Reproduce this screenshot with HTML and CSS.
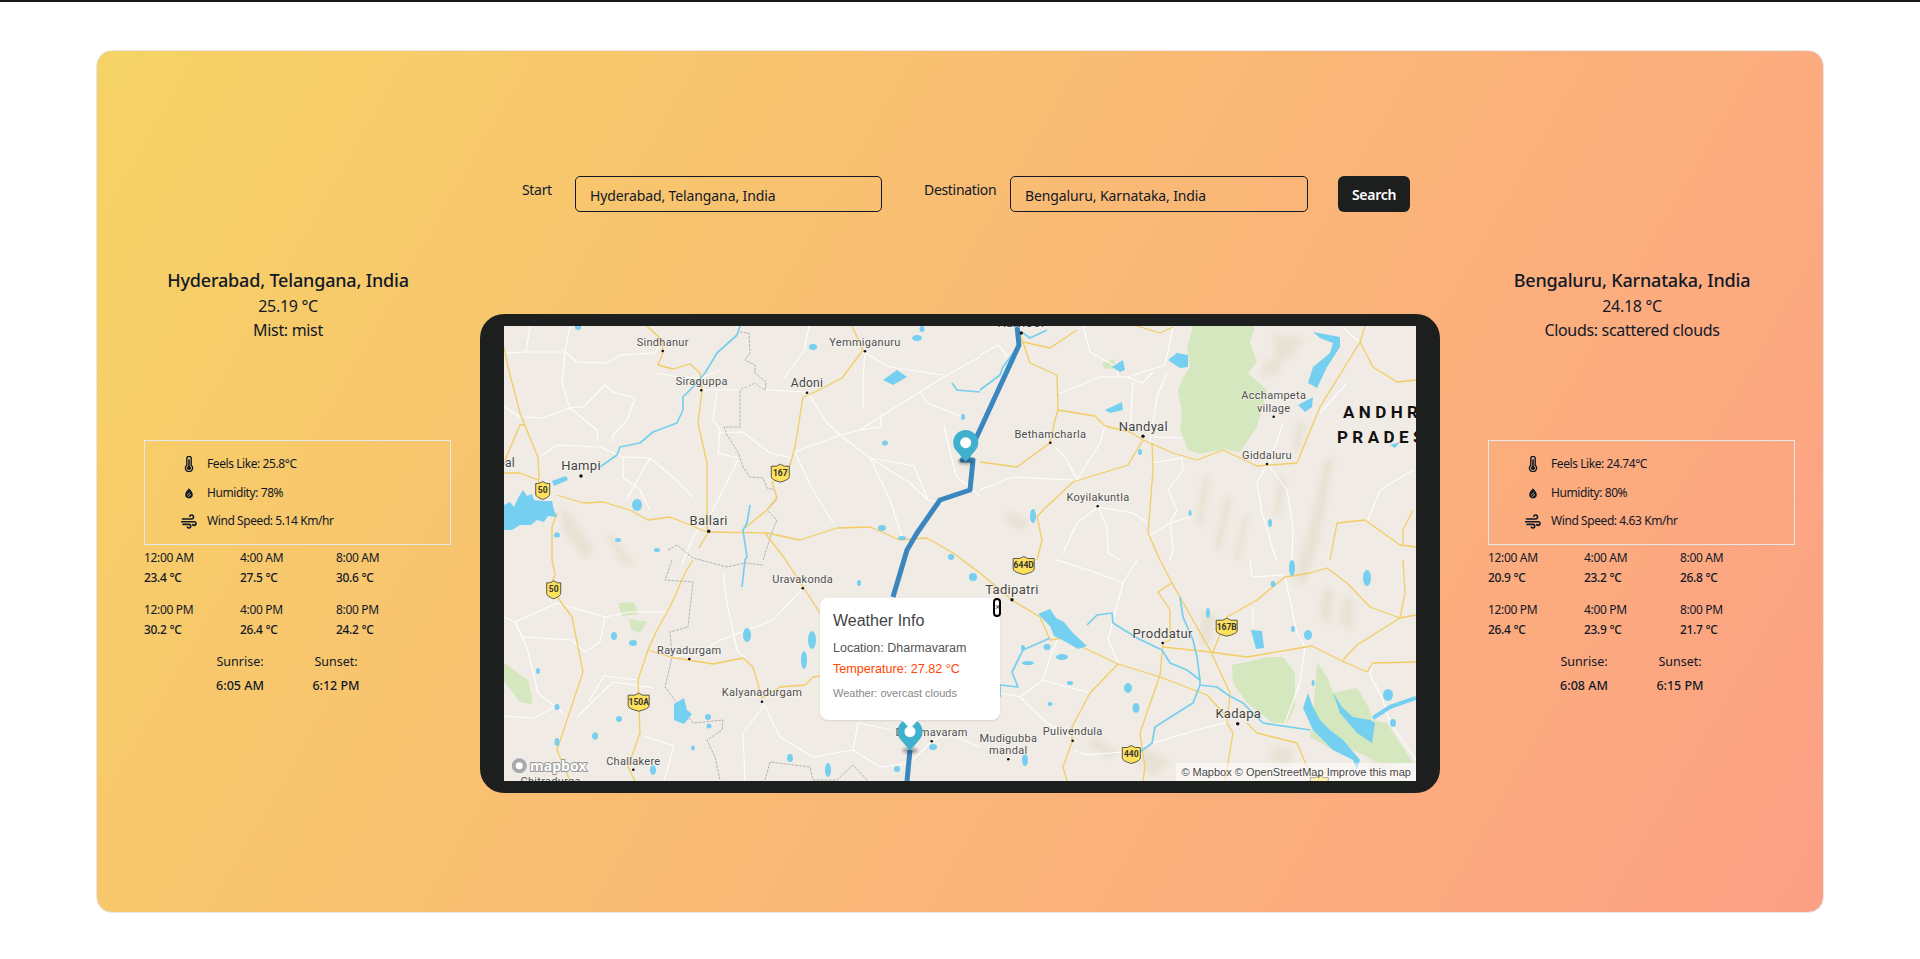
FILE: index.html
```html
<!DOCTYPE html>
<html>
<head>
  <meta charset="utf-8">
  <title>Route Weather</title>
  <link rel="stylesheet" href="styles.css">
</head>

<body>
  <div class="topbar"></div>
  <main class="card">
    <form class="search">
      <label class="label-start" for="start">Start</label>
      <input class="input-start" id="start" type="text" value="Hyderabad, Telangana, India">
      <label class="label-dest" for="dest">Destination</label>
      <input class="input-dest" id="dest" type="text" value="Bengaluru, Karnataka, India">
      <button type="button" class="search-btn">Search</button>
    </form>

    <div class="columns">
      <section class="city">
        <h2>Hyderabad, Telangana, India</h2>
        <p>25.19 °C</p>
        <p>Mist: mist</p>
        <div class="stats">
          <div class="stat"><svg class="icon"><use href="#i-temp"/></svg><span>Feels Like: 25.8°C</span></div>
          <div class="stat"><svg class="icon"><use href="#i-drop"/></svg><span>Humidity: 78%</span></div>
          <div class="stat"><svg class="icon"><use href="#i-wind"/></svg><span>Wind Speed: 5.14 Km/hr</span></div>
        </div>
        <div class="hours">
          <div><span>12:00 AM</span><b>23.4 °C</b></div>
          <div><span>4:00 AM</span><b>27.5 °C</b></div>
          <div><span>8:00 AM</span><b>30.6 °C</b></div>
          <div><span>12:00 PM</span><b>30.2 °C</b></div>
          <div><span>4:00 PM</span><b>26.4 °C</b></div>
          <div><span>8:00 PM</span><b>24.2 °C</b></div>
        </div>
        <div class="sun">
          <div><span>Sunrise:</span><b>6:05 AM</b></div>
          <div><span>Sunset:</span><b>6:12 PM</b></div>
        </div>
      </section>

      <section class="map-frame">
        <div class="map">
          <svg class="map-svg" viewBox="0 0 912 455" width="912" height="455">
            <defs>
              <symbol id="i-temp" viewBox="0 0 16 16" overflow="visible">
                <path d="M5.8 9.2V2.6a2.2 2.2 0 0 1 4.4 0v6.6a3.6 3.6 0 1 1-4.4 0Z" fill="none" stroke="#111827" stroke-width="1.4"/>
                <circle cx="8" cy="12" r="2.1" fill="#111827"/>
                <rect x="7.2" y="3.4" width="1.6" height="8" fill="#111827"/>
              </symbol>
              <symbol id="i-drop" viewBox="0 0 16 16" overflow="visible">
                <path d="M8 3.2C9.6 5.4 11.8 7.2 11.8 9.6a3.8 3.8 0 0 1-7.6 0C4.2 7.2 6.4 5.4 8 3.2Z" fill="#111827"/>
                <path d="M6 10.2 9 7.6M7 11.8l3-2.4" stroke="#f7c96c" stroke-width=".8"/>
              </symbol>
              <symbol id="i-wind" viewBox="0 0 16 16" overflow="visible">
                <path d="M1.5 6h9a2 2 0 1 0-1.8-2.8M.5 8.8h12.7a1.8 1.8 0 1 1-1.6 2.7M2 11.4h6a1.8 1.8 0 1 1-1.6 2.7" fill="none" stroke="#111827" stroke-width="1.6" stroke-linecap="round"/>
              </symbol>
              <path id="shield" d="M-7-6.5h3.2L0-8.5l3.8 2H7V4Q7 7 0 9.5-7 7-7 4Z"/>
              <path id="shield-w" d="M-9-6.5h5L0-8.5l4 2h5V4Q9 7 0 9.5-9 7-9 4Z"/>
              <path id="shield-x" d="M-10.5-6.5h6.5L0-8.5l4 2h6.5V4Q10.5 7 0 9.5-10.5 7-10.5 4Z"/>
            </defs>

            <rect class="land" width="912" height="455"/>

            <!-- relief -->
            <g class="relief">
              <polygon points="56,182 68,190 90,225 80,232 60,205"/>
              <polygon points="100,205 112,215 130,238 118,238"/>
              <polygon points="770,8 800,12 790,30 770,36"/>
              <polygon points="760,36 780,30 775,48 758,50"/>
              <polygon points="700,150 706,152 698,200 692,198"/>
              <polygon points="722,170 728,172 716,225 710,222"/>
              <polygon points="740,190 745,192 735,234 730,232"/>
              <polygon points="820,135 830,132 815,215 800,260 790,255 808,190"/>
              <polygon points="775,150 782,152 776,190 770,188"/>
              <polygon points="795,95 802,98 795,125 788,120"/>
              <polygon points="840,270 850,275 848,305 835,295"/>
              <polygon points="820,260 830,265 826,300 815,290"/>
              <polygon points="505,185 525,195 518,205 500,195"/>
              <polygon points="590,410 615,425 605,432 585,420"/>
              <polygon points="700,285 712,290 705,320 695,315"/>
              <polygon points="770,420 790,425 785,440 765,435"/>
              <polygon points="870,420 890,430 880,445 865,435"/>
              <polygon points="640,420 665,435 650,450 635,440"/>
            </g>

            <!-- parks -->
            <g class="park">
              <polygon points="689,0 683,21 686,41 678,54 674,64 678,87 676,104 684,124 696,128 719,123 736,126 753,101 763,64 744,47 753,36 746,17 751,0"/>
              <polygon points="728,339 729,357 743,377 769,397 783,397 791,381 791,347 779,331 763,331 743,336"/>
              <polygon points="813,336 823,351 829,367 853,362 866,384 868,394 883,397 909,437 876,437 843,421 829,424 806,411 809,391"/>
              <polygon points="0,337 24,354 28,370 28,378 16,376 0,355"/>
              <polygon points="114,277 130,276 134,288 118,290"/>
              <polygon points="125,293 143,296 136,307 127,303"/>
              <polygon points="598,37 610,33 612,42 600,43"/>
            </g>

            <!-- white roads -->
            <g class="road">
              <polyline points="0,27 23,26 61,26 73,36 103,37 116,29 151,27 156,17"/>
              <polyline points="61,26 58,57 66,82 93,104 94,116"/>
              <polyline points="66,82 79,81 101,59 109,66 131,72 123,94 109,109 109,116"/>
              <polyline points="0,81 16,91 39,92 66,82"/>
              <polyline points="26,0 22,26"/>
              <polyline points="66,0 61,26"/>
              <polyline points="36,131 53,119 96,121 119,131 146,132 169,151 189,171"/>
              <polyline points="119,131 119,151 136,164 146,184"/>
              <polyline points="146,132 130,160 122,175"/>
              <polyline points="153,47 173,51 196,52 216,44"/>
              <polyline points="196,64 236,64 251,57 263,64 303,66"/>
              <polyline points="304,67 323,97 336,109 366,132 406,157 424,174"/>
              <polyline points="291,126 336,109 356,104 376,91 443,49 476,31"/>
              <polyline points="366,132 386,174 399,214"/>
              <polyline points="291,127 309,164 329,197"/>
              <polyline points="234,134 209,184 189,211"/>
              <polyline points="416,66 423,77 459,91"/>
              <polyline points="378,87 376,101 356,104"/>
              <polyline points="361,27 359,51 359,81"/>
              <polyline points="359,26 386,41 439,49"/>
              <polyline points="305,0 300,25 280,52"/>
              <polyline points="213,67 209,94 216,104 214,127 234,132"/>
              <polyline points="214,107 239,106 266,127 288,132"/>
              <polyline points="366,132 410,140 424,174 440,178"/>
              <polyline points="440,100 452,150 476,170"/>
              <polyline points="189,211 178,238"/>
              <polyline points="0,291 11,296 53,277 101,291 126,286 164,286"/>
              <polyline points="11,296 23,321 34,367 59,387"/>
              <polyline points="11,296 18,311 68,314 81,326 96,316 101,291"/>
              <polyline points="73,391 109,356 149,362"/>
              <polyline points="0,390 30,392 53,380"/>
              <polyline points="259,377 276,411 309,431 349,424 354,397 388,404"/>
              <polyline points="259,381 239,407 241,455"/>
              <polyline points="219,247 223,277 233,324 241,332"/>
              <polyline points="299,262 269,294 243,304 216,314 196,327 169,331"/>
              <polyline points="349,424 376,441 406,437 428,415"/>
              <polyline points="428,415 443,407 476,421"/>
              <polyline points="134,354 100,350 85,375"/>
              <polyline points="140,410 170,420 160,455"/>
              <polyline points="496,367 516,371 539,354 546,331 554,312"/>
              <polyline points="539,354 586,367"/>
              <polyline points="516,371 543,397 569,411"/>
              <polyline points="619,257 604,314 614,336"/>
              <polyline points="553,234 593,247 619,257 633,234"/>
              <polyline points="569,424 583,429 618,426 649,417 693,404 724,396"/>
              <polyline points="749,281 749,301"/>
              <polyline points="781,251 793,307 801,321 796,357 781,397"/>
              <polyline points="869,337 866,349 879,374 886,397 912,434"/>
              <polyline points="746,234 748,251 781,249"/>
              <polyline points="476,29 494,19 509,37"/>
              <polyline points="556,67 596,51 623,51 661,39 669,1"/>
              <polyline points="623,51 639,57 649,46"/>
              <polyline points="629,56 626,106"/>
              <polyline points="579,0 586,26 613,41 614,51"/>
              <polyline points="663,47 653,71 646,116"/>
              <polyline points="649,111 679,112"/>
              <polyline points="476,164 509,151 569,154"/>
              <polyline points="551,121 563,134 573,154 596,117 601,100"/>
              <polyline points="648,137 678,132 679,144 664,164 673,184 666,197 643,211"/>
              <polyline points="666,197 686,191"/>
              <polyline points="666,197 669,224 666,234"/>
              <polyline points="594,181 603,201 604,227 616,234"/>
              <polyline points="594,181 629,187 643,197"/>
              <polyline points="594,181 573,197 559,227"/>
              <polyline points="763,139 753,157 758,187 769,224 773,234"/>
              <polyline points="764,139 783,164 789,201 788,234"/>
              <polyline points="816,87 843,57"/>
              <polyline points="779,97 769,127 766,137"/>
              <polyline points="909,144 876,164 864,194"/>
              <polyline points="856,17 839,1"/>
            </g>

            <!-- state borders -->
            <g class="border">
              <polyline points="236,6 245,7 246,27 241,34 251,39 251,47 262,56 261,64 251,57 236,64 236,101 220,101 223,109 234,126 239,141 246,151 259,152 263,162 271,164 273,174 263,184 273,194 268,206 259,234"/>
              <polyline points="168,234 161,254 189,256 184,301 166,306 168,331 161,361 176,381 189,397 219,394 218,404 203,414 211,431 216,454"/>
              <polyline points="164,224 173,219 189,232 223,241 241,237 259,239"/>
              <polyline points="261,454 266,436 306,441 309,454 333,454 349,439 363,454"/>
            </g>

            <!-- highways -->
            <g class="hwy">
              <polyline points="0,21 4,41 16,87 24,107 34,131 35,154"/>
              <polyline points="0,147 16,147 34,154 39,164"/>
              <polyline points="53,169 79,177 99,176 126,184 144,194 166,191 203,206 263,207 296,214 333,202 366,201 396,214 423,212 449,227 476,247 508,274 536,291 546,314 559,312 614,338 656,351 703,369 723,391"/>
              <polyline points="143,0 158,14 159,27 154,39 169,43 186,38 196,47 198,64 194,97 203,137 203,204"/>
              <polyline points="348,0 359,24 338,52 309,67 299,71 291,121 286,139 268,157 273,171 263,184 241,202"/>
              <polyline points="205,205 195,222"/>
              <polyline points="261,207 281,233 316,287"/>
              <polyline points="48,234 48,201 53,187"/>
              <polyline points="48,234 51,249 49,254 54,272 68,291 79,346 53,424 66,455"/>
              <polyline points="189,234 181,247 166,281 153,304 144,324 134,354 136,407 124,441 131,455"/>
              <polyline points="144,324 166,331 209,338 239,332 249,341 258,372 276,361 301,359 309,351 316,350"/>
              <polyline points="519,16 526,37 553,49 554,84 591,90 601,100 626,106 639,114 669,127 693,134 719,124 753,140 793,137 816,81 856,16 861,0"/>
              <polyline points="856,16 869,41 893,56 912,54"/>
              <polyline points="476,136 513,141 546,117 551,94 554,84"/>
              <polyline points="639,114 624,139 569,156 539,184 533,191 538,214 533,234"/>
              <polyline points="648,117 649,144 644,207 656,234 668,257 706,324 726,367 723,397 729,407 721,455"/>
              <polyline points="668,257 654,266 666,284 666,314 659,317 656,349 636,407 641,441 639,455"/>
              <polyline points="659,321 706,326 743,331 796,322 808,320 836,334 863,346 869,337 912,336"/>
              <polyline points="709,326 723,291 753,274 781,251 806,247 823,242 843,257 866,281 896,292 912,289"/>
              <polyline points="896,292 901,267 899,234"/>
              <polyline points="826,234 833,197 861,194 896,219 912,221"/>
              <polyline points="899,219 899,204 909,184"/>
              <polyline points="839,334 853,319 896,292"/>
              <polyline points="743,397 753,407 793,417 803,441"/>
              <polyline points="614,338 586,367 568,401 568,416 559,441 563,455"/>
              <polyline points="573,4 546,22 519,16 513,0"/>
              <polyline points="633,0 656,7 669,1"/>
              <polyline points="21,99 16,99 1,134"/>
            </g>

            <!-- rivers -->
            <g class="river">
              <polyline points="236,0 233,9 213,27 201,47 189,61 179,71 179,84 173,97 149,106 136,117 116,121 113,129 96,141"/>
              <polyline points="476,64 496,49 499,41 513,22"/>
              <polyline points="519,7 526,12 543,4"/>
              <polyline points="448,57 453,64 476,66"/>
              <polyline points="246,179 243,197 239,204 243,231 241,234 238,261"/>
              <polyline points="583,299 593,289 608,287 609,297 633,312 658,324 666,337 683,344 696,354 696,359 713,361 724,369 739,377 759,397 806,404"/>
              <polyline points="696,359 689,377 673,387 651,401 648,417 636,426"/>
              <polyline points="676,271 679,291 689,314 693,331 696,354"/>
              <polyline points="546,312 519,324 508,346 514,361 496,359 496,371"/>
              <polyline class="wide" points="869,392 886,381 912,372"/>
            </g>

            <!-- lakes -->
            <g class="water">
              <polygon points="0,179 6,176 10,181 14,172 19,164 23,170 28,168 30,174 39,175 48,175 50,184 53,191 44,190 40,196 33,194 27,199 16,199 8,204 0,204"/>
              <polygon points="48,155 62,150 64,154 50,160"/>
              <polygon points="534,288 546,283 552,292 560,296 568,306 583,320 574,323 562,316 550,310 546,300"/>
              <polygon points="804,367 799,382 809,404 829,424 849,434 853,444 856,434 839,414 826,404 816,394 809,381"/>
              <polygon points="829,367 836,387 853,407 868,417 871,397 866,394 849,391 838,381"/>
              <polygon points="664,34 673,27 684,29 684,41 676,42"/>
              <polygon points="608,41 619,34 621,44 616,46"/>
              <polygon points="601,84 618,76 619,84 606,87"/>
              <polygon points="809,6 836,11 836,21 823,41 813,62 804,57 809,41 826,27 829,17 816,12"/>
              <polygon points="794,79 809,71 808,81 801,86"/>
              <polygon points="886,119 896,116 891,122"/>
              <polygon points="379,54 393,44 403,51 389,59"/>
              <polygon points="170,378 180,372 183,384 188,388 180,398 170,394"/>
              <polygon points="747,304 758,305 760,322 752,323"/>
              <ellipse cx="413" cy="12" rx="5" ry="3"/>
              <ellipse cx="418" cy="3" rx="2.5" ry="3"/>
              <ellipse cx="309" cy="21" rx="4" ry="3"/>
              <ellipse cx="74" cy="1" rx="3" ry="3"/>
              <ellipse cx="459" cy="91" rx="2" ry="3"/>
              <ellipse cx="381" cy="117" rx="3" ry="2.5"/>
              <ellipse cx="133" cy="179" rx="5" ry="6"/>
              <ellipse cx="378" cy="202" rx="4" ry="3"/>
              <ellipse cx="398" cy="212" rx="4" ry="2"/>
              <ellipse cx="447" cy="231" rx="3" ry="3"/>
              <ellipse cx="53" cy="209" rx="3" ry="2.5"/>
              <ellipse cx="114" cy="214" rx="3" ry="2"/>
              <ellipse cx="153" cy="224" rx="3" ry="2"/>
              <ellipse cx="110" cy="310" rx="3" ry="4"/>
              <ellipse cx="129" cy="317" rx="4" ry="3"/>
              <ellipse cx="34" cy="345" rx="2" ry="3"/>
              <ellipse cx="53" cy="381" rx="2.5" ry="3"/>
              <ellipse cx="115" cy="393" rx="3" ry="3"/>
              <ellipse cx="91" cy="410" rx="3" ry="3.5"/>
              <ellipse cx="53" cy="416" rx="2.5" ry="4"/>
              <ellipse cx="204" cy="391" rx="3" ry="3"/>
              <ellipse cx="205" cy="400" rx="2.5" ry="2.5"/>
              <ellipse cx="189" cy="422" rx="2" ry="2.5"/>
              <ellipse cx="243" cy="309" rx="4" ry="7"/>
              <ellipse cx="308" cy="314" rx="4" ry="9"/>
              <ellipse cx="300" cy="334" rx="3" ry="9"/>
              <ellipse cx="286" cy="432" rx="3" ry="4"/>
              <ellipse cx="324" cy="444" rx="3" ry="7"/>
              <ellipse cx="355" cy="257" rx="2" ry="3"/>
              <ellipse cx="469" cy="251" rx="4" ry="4"/>
              <ellipse cx="149" cy="444" rx="3" ry="5"/>
              <ellipse cx="393" cy="443" rx="3" ry="3"/>
              <ellipse cx="429" cy="421" rx="4" ry="3"/>
              <ellipse cx="704" cy="287" rx="2" ry="5"/>
              <ellipse cx="769" cy="258" rx="2.5" ry="3"/>
              <ellipse cx="789" cy="303" rx="2" ry="3"/>
              <ellipse cx="804" cy="309" rx="4" ry="5"/>
              <ellipse cx="558" cy="331" rx="6" ry="3"/>
              <ellipse cx="524" cy="337" rx="6" ry="2"/>
              <ellipse cx="519" cy="322" rx="2" ry="3"/>
              <ellipse cx="543" cy="321" rx="3.5" ry="3"/>
              <ellipse cx="624" cy="362" rx="4" ry="5"/>
              <ellipse cx="632" cy="382" rx="3.5" ry="5"/>
              <ellipse cx="566" cy="357" rx="3" ry="2"/>
              <ellipse cx="546" cy="378" rx="2.5" ry="2"/>
              <ellipse cx="521" cy="434" rx="3" ry="6"/>
              <ellipse cx="529" cy="190" rx="3" ry="7"/>
              <ellipse cx="636" cy="126" rx="2" ry="3"/>
              <ellipse cx="686" cy="187" rx="1.5" ry="3"/>
              <ellipse cx="766" cy="197" rx="2" ry="4"/>
              <ellipse cx="863" cy="252" rx="4" ry="8"/>
              <ellipse cx="788" cy="242" rx="3" ry="8"/>
              <ellipse cx="884" cy="369" rx="5" ry="6"/>
              <ellipse cx="889" cy="397" rx="3" ry="4"/>
              <ellipse cx="809" cy="357" rx="1.5" ry="3"/>
            </g>

            <!-- route and markers -->
            <polyline class="route" points="513,0 515,19 474,108 464,130 458,134 469,134 466,164 436,174 413,207 403,224 389,271"/>
            <polyline class="route" points="406,424 403,455"/>

            <!-- shields -->
            <g class="shield">
              <g transform="translate(38.7 164)"><use href="#shield"/><text y="3">50</text></g>
              <g transform="translate(276.3 146.7)"><use href="#shield-w"/><text y="3">167</text></g>
              <g transform="translate(49.7 263.3)"><use href="#shield"/><text y="3">50</text></g>
              <g transform="translate(134.7 375.7)"><use href="#shield-x"/><text y="3">150A</text></g>
              <g transform="translate(519.7 239)"><use href="#shield-x"/><text y="3">644D</text></g>
              <g transform="translate(722.7 300.7)"><use href="#shield-x"/><text y="3">167B</text></g>
              <g transform="translate(627.3 428)"><use href="#shield-w"/><text y="3">440</text></g>
              <g transform="translate(815.3 458)"><use href="#shield-w"/></g>
            </g>

            <!-- places -->
            <g class="dots">
              <circle cx="158.7" cy="25" r="1.3"/><circle cx="361" cy="25.3" r="1.3"/><circle cx="197.3" cy="64.3" r="1.3"/>
              <circle cx="303" cy="66.7" r="1.3"/><circle cx="77" cy="150" r="1.7"/><circle cx="204.7" cy="205.3" r="1.7"/>
              <circle cx="298.7" cy="262.3" r="1.3"/><circle cx="185.3" cy="333" r="1.3"/><circle cx="258" cy="375.7" r="1.3"/>
              <circle cx="129.3" cy="443.7" r="1.3"/><circle cx="427.7" cy="415.3" r="1.3"/><circle cx="504.3" cy="433.3" r="1.3"/>
              <circle cx="568.7" cy="414.7" r="1.3"/><circle cx="508" cy="273.7" r="1.7"/><circle cx="658.7" cy="317" r="1.3"/>
              <circle cx="733.7" cy="397.7" r="1.7"/><circle cx="546.3" cy="116.7" r="1.3"/><circle cx="639" cy="110.3" r="1.7"/>
              <circle cx="593.7" cy="180.3" r="1.3"/><circle cx="769.7" cy="90.7" r="1.3"/><circle cx="763" cy="138" r="1.3"/>
              <circle cx="517.3" cy="7" r="1.7"/>
            </g>
            <g class="place">
              <text x="158.7" y="20">Sindhanur</text>
              <text x="361" y="20">Yemmiganuru</text>
              <text x="197.7" y="59">Siraguppa</text>
              <text x="298.7" y="257">Uravakonda</text>
              <text x="185.3" y="328">Rayadurgam</text>
              <text x="258" y="370">Kalyanadurgam</text>
              <text x="129.3" y="439">Challakere</text>
              <text x="46.7" y="459">Chitradurga</text>
              <text x="427.7" y="409.5">Dharmavaram</text>
              <text x="504.3" y="415.5">Mudigubba</text>
              <text x="504.3" y="428">mandal</text>
              <text x="568.7" y="409">Pulivendula</text>
              <text x="546.3" y="112">Bethamcharla</text>
              <text x="594" y="175">Koyilakuntla</text>
              <text x="769.7" y="73">Acchampeta</text>
              <text x="769.7" y="86">village</text>
              <text x="763" y="132.5">Giddaluru</text>
            </g>
            <g class="place place-mid">
              <text x="303" y="61" class="adoni">Adoni</text>
              <text x="77" y="143.5">Hampi</text>
              <text x="204.7" y="199">Ballari</text>
              <text x="517" y="1">Kurnool</text>
              <text x="508" y="268">Tadipatri</text>
              <text x="658.7" y="311.5">Proddatur</text>
              <text x="734.3" y="392">Kadapa</text>
              <text x="639.3" y="105">Nandyal</text>
              <text x="11" y="141" class="cut">Koppal</text>
            </g>
            <g class="state">
              <text x="839" y="92">ANDHRA</text>
              <text x="833" y="116.5">PRADESH</text>
            </g>

            <g>
              <ellipse class="pin-shadow" cx="461.7" cy="135.5" rx="8" ry="3"/>
              <path class="pin" d="M461.7 135.7 452.6 125A12.5 12.5 0 1 1 470.8 125Z"/>
              <circle class="pin-dot" cx="461.7" cy="116.7" r="5.5"/>
              <ellipse class="pin-shadow" cx="406" cy="424.5" rx="8" ry="3"/>
              <path class="pin" d="M406 424.7 396.9 414A12.5 12.5 0 1 1 415.1 414Z"/>
              <circle class="pin-dot" cx="406" cy="405.7" r="5.5"/>
            </g>

            <!-- mapbox logo -->
            <g class="logo">
              <circle cx="15.3" cy="439.7" r="8.5"/>
              <circle class="logo-in" cx="15.3" cy="439.7" r="3.5"/>
              <text x="26" y="444.5">mapbox</text>
            </g>
          </svg>

          <div class="popup">
            <button type="button" class="popup-close">×</button>
            <h3>Weather Info</h3>
            <p class="loc">Location: Dharmavaram</p>
            <p class="temp">Temperature: 27.82 °C</p>
            <p class="desc">Weather: overcast clouds</p>
          </div>
          <div class="popup-tip"></div>
          <div class="attrib">© Mapbox © OpenStreetMap <span>Improve this map</span></div>
        </div>
      </section>

      <section class="city">
        <h2>Bengaluru, Karnataka, India</h2>
        <p>24.18 °C</p>
        <p>Clouds: scattered clouds</p>
        <div class="stats">
          <div class="stat"><svg class="icon"><use href="#i-temp"/></svg><span>Feels Like: 24.74°C</span></div>
          <div class="stat"><svg class="icon"><use href="#i-drop"/></svg><span>Humidity: 80%</span></div>
          <div class="stat"><svg class="icon"><use href="#i-wind"/></svg><span>Wind Speed: 4.63 Km/hr</span></div>
        </div>
        <div class="hours">
          <div><span>12:00 AM</span><b>20.9 °C</b></div>
          <div><span>4:00 AM</span><b>23.2 °C</b></div>
          <div><span>8:00 AM</span><b>26.8 °C</b></div>
          <div><span>12:00 PM</span><b>26.4 °C</b></div>
          <div><span>4:00 PM</span><b>23.9 °C</b></div>
          <div><span>8:00 PM</span><b>21.7 °C</b></div>
        </div>
        <div class="sun">
          <div><span>Sunrise:</span><b>6:08 AM</b></div>
          <div><span>Sunset:</span><b>6:15 PM</b></div>
        </div>
      </section>
    </div>
  </main>
</body>

</html>
```

FILE: styles.css
```css
* {
  box-sizing: border-box;
}

body {
  margin: 0;
  background: #fff;
  color: #111827;
  font-family: "Noto Sans", sans-serif;
  letter-spacing: -0.02em;
}

h2, h3, p {
  margin: 0;
  font-weight: 400;
}

b {
  font-weight: 500;
}

.topbar {
  height: 2px;
  background: #18181b;
}

.card {
  width: 1728px;
  height: 863px;
  margin: 48px auto 0;
  border: 1px solid #e5e7eb;
  border-radius: 16px;
  background: linear-gradient(120deg, #f6d365 0%, #fda085 100%);
}

/* search row */
.search {
  display: flex;
  align-items: flex-start;
  padding: 125px 0 0 425px;
  height: 161px;
  font-size: 14px;
}

.search label {
  line-height: 20px;
  margin-top: 4px;
}

.label-start {
  width: 53px;
}

.label-dest {
  width: 86px;
  margin-left: 42px;
}

.search input {
  height: 36px;
  padding: 2px 14px 0;
  border: 1px solid #111827;
  border-radius: 5px;
  background: transparent;
  color: #111827;
  font: inherit;
  letter-spacing: -0.008em;
  outline: none;
}

.input-start {
  width: 307px;
}

.input-dest {
  width: 298px;
}

.search-btn {
  width: 72px;
  height: 36px;
  margin-left: 30px;
  border: 0;
  border-radius: 6px;
  background: #1d1f1e;
  color: #fff;
  font: 600 14px "Noto Sans", sans-serif;
  letter-spacing: -0.02em;
}

.columns {
  display: grid;
  grid-template-columns: 288px 960px 288px;
  gap: 48px;
  padding: 54px 47px 0;
}

/* city columns */
.city {
  text-align: center;
  font-size: 16px;
  line-height: 24px;
}

.city h2 {
  font-size: 18px;
  font-weight: 500;
  line-height: 28px;
  letter-spacing: -0.01em;
}

.stats {
  width: 307px;
  height: 105px;
  margin-top: 98px;
  padding: 9px 0 0 36px;
  border: 1px solid #e5e7eb;
  text-align: left;
  font-size: 12px;
  letter-spacing: -0.035em;
}

.stat {
  display: flex;
  align-items: center;
  height: 28.5px;
  line-height: 20px;
}

.icon {
  width: 16px;
  height: 16px;
  margin-right: 10px;
  flex: none;
}

.hours {
  display: grid;
  grid-template-columns: repeat(3, 96px);
  row-gap: 13px;
  margin-top: 3px;
  text-align: left;
  font-size: 12px;
  line-height: 19.5px;
}

.hours span, .hours b, .sun span, .sun b {
  display: block;
}

.sun {
  display: grid;
  grid-template-columns: repeat(2, 96px);
  justify-content: start;
  margin: 13px 0 0 48px;
  font-size: 12.5px;
  line-height: 20px;
  letter-spacing: 0;
}

.sun b {
  margin-top: 4px;
}

/* map */
.map-frame {
  height: 479px;
  margin-top: 48px;
  padding: 12px 24px;
  border-radius: 24px;
  background: #1d1f1e;
}

.map {
  position: relative;
  width: 912px;
  height: 455px;
  overflow: hidden;
  letter-spacing: 0;
}

.map-svg {
  display: block;
}

.land {
  fill: #f0ebe4;
}

.relief polygon {
  fill: #e8e2d5;
}

.relief {
  filter: blur(2.5px);
}

.park polygon {
  fill: #d5e7be;
}

.road polyline {
  fill: none;
  stroke: #fff;
  stroke-width: 1.2;
  stroke-linejoin: round;
  opacity: 0.9;
}

.border polyline {
  fill: none;
  stroke: #b4b4ba;
  stroke-width: 1;
  stroke-dasharray: 3 1;
}

.hwy polyline {
  fill: none;
  stroke: #f2cd63;
  stroke-width: 1.3;
  stroke-linejoin: round;
}

.river polyline {
  fill: none;
  stroke: #75cff0;
  stroke-width: 1.7;
  stroke-linejoin: round;
}

.river .wide {
  stroke-width: 4;
}

.water polygon, .water ellipse {
  fill: #75cff0;
}

.route {
  fill: none;
  stroke: #3a87c0;
  stroke-width: 5;
  stroke-linejoin: round;
}

.shield use {
  fill: #fde05c;
  stroke: #4a4a40;
  stroke-width: 0.9;
}

.shield text {
  font: 700 8.5px "Roboto", sans-serif;
  fill: #333;
  text-anchor: middle;
}

.dots circle {
  fill: #111;
}

.place text {
  font: 400 11px "Roboto", sans-serif;
  letter-spacing: 0.3px;
  fill: #4d4d4d;
  text-anchor: middle;
  stroke: rgba(255, 255, 255, 0.5);
  stroke-width: 1.5px;
  paint-order: stroke;
}

.place-mid text {
  font-size: 13px;
  fill: #444;
}

.place-mid .cut {
  text-anchor: end;
  font-size: 12px;
}

.place-mid .adoni {
  font-size: 12px;
}

.state text {
  font: 700 17px "Roboto", sans-serif;
  letter-spacing: 4.4px;
  fill: #111;
}

.pin {
  fill: #3fb1ce;
}

.pin-dot {
  fill: #fff;
}

.pin-shadow {
  fill: rgba(0, 0, 0, 0.3);
  filter: blur(1.5px);
}

.logo circle {
  fill: #aaa;
  stroke: #eee;
  stroke-width: 2;
}

.logo .logo-in {
  fill: #fff;
  stroke: none;
}

.logo text {
  font: 700 14px "Open Sans", sans-serif;
  fill: #fff;
  stroke: #999;
  stroke-width: 2px;
  paint-order: stroke;
}

.popup {
  position: absolute;
  left: 316px;
  top: 272px;
  width: 180px;
  height: 122px;
  padding: 13px 13px 0;
  border-radius: 8px;
  background: #fff;
  box-shadow: 0 1px 2px rgba(0, 0, 0, 0.1);
  font-family: "Liberation Sans", Arial, sans-serif;
}

.popup h3 {
  font-size: 16px;
  line-height: 20px;
  color: #444;
}

.popup .loc {
  margin-top: 7px;
  font-size: 12.5px;
  line-height: 20px;
  color: #555;
}

.popup .temp {
  margin-top: 1px;
  font-size: 12.6px;
  line-height: 20px;
  color: #ff4500;
}

.popup .desc {
  margin-top: 4px;
  font-size: 11px;
  line-height: 20px;
  color: #888;
}

.popup-tip {
  position: absolute;
  left: 398px;
  top: 394px;
  width: 0;
  height: 0;
  border-left: 8px solid transparent;
  border-right: 8px solid transparent;
  border-top: 9px solid #fff;
}

.popup-close {
  position: absolute;
  right: -1px;
  top: 0;
  width: 8px;
  height: 19px;
  padding: 0;
  border: 2px solid #000;
  border-radius: 4px;
  background: #fff;
  color: #333;
  font: 9px/15px "Liberation Sans", sans-serif;
  overflow: hidden;
}

.attrib {
  position: absolute;
  right: 0;
  bottom: 0;
  height: 18px;
  padding: 0 5px;
  background: rgba(255, 255, 255, 0.5);
  color: rgba(0, 0, 0, 0.75);
  font: 11px/18px "Liberation Sans", Arial, sans-serif;
}
```
